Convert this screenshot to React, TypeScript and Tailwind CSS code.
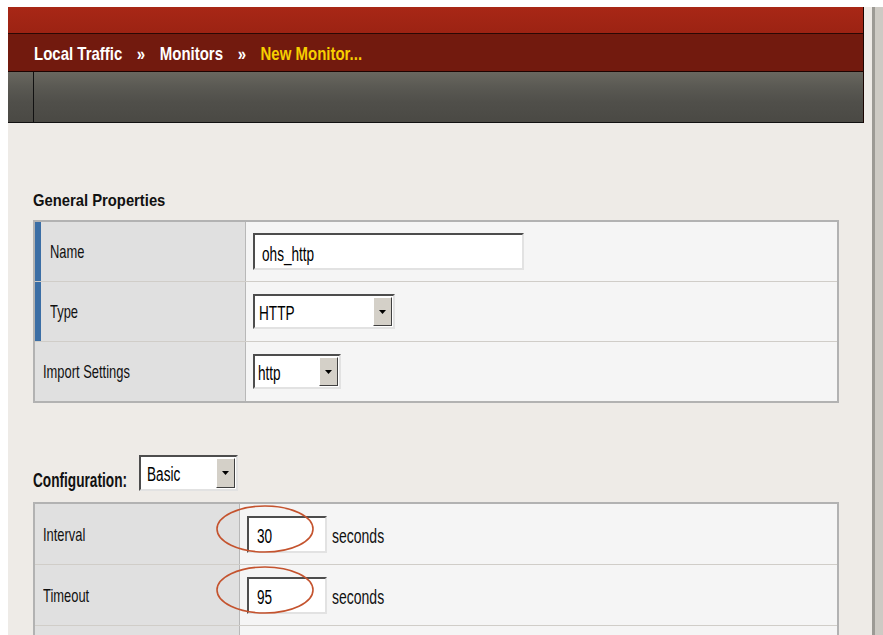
import React from "react";

// the old admin skin uses a tall, narrow face, so text runs get squeezed horizontally
const narrow = "inline-block origin-left scale-x-[0.68] whitespace-nowrap";
const narrowWide = "inline-block origin-left scale-x-[0.7] whitespace-nowrap";

// classic sunken text box
const TextBox = ({ value, width, pad }: { value: string; width: string; pad: string }) => (
	<div className={`${width} ${pad} h-[37px] flex items-center pt-[4px] bg-white border-2 border-t-[#4d4d4d] border-l-[#4d4d4d] border-r-[#e2e2e2] border-b-[#e2e2e2] text-[20px] leading-none text-black`}>
		<span className={narrow}>{value}</span>
	</div>
);

const Select = ({ value, width, height, pad }: { value: string; width: string; height: string; pad: string }) => (
	<div className={`${width} ${height} flex bg-white border-2 border-t-[#4d4d4d] border-l-[#4d4d4d] border-r-[#e2e2e2] border-b-[#e2e2e2]`}>
		<span className={`flex-1 flex items-center ${pad} pt-[2px] text-[20px] leading-none text-black`}>
			<span className={narrow}>{value}</span>
		</span>
		<span className="w-[19px] my-[1px] mr-[1px] flex items-center justify-center bg-[#d4d0c8] border border-t-[#ffffff] border-l-[#ffffff] border-r-[#404040] border-b-[#404040]">
			<svg width="7" height="4" viewBox="0 0 7 4">
				<path d="M0 0h7L3.5 4z" fill="#000" />
			</svg>
		</span>
	</div>
);

// red ring drawn over a field
const Ring = () => (
	<svg className="absolute left-[-31px] top-[-11px] z-10 pointer-events-none" width="100" height="50" viewBox="0 0 100 50">
		<ellipse cx="49" cy="24" rx="48" ry="23" fill="none" stroke="#c4532e" strokeWidth="1.6" />
	</svg>
);

type RowProps = {
	label: string;
	labelW: string;
	marker?: boolean;
	last?: boolean;
	height: string;
	children?: React.ReactNode;
};

const Row = ({ label, labelW, marker, last, height, children }: RowProps) => (
	<div className={`flex ${height} ${last ? "" : "border-b border-[#d0cdc8]"}`}>
		<div className={`${labelW} flex items-stretch bg-[#e0e0e0] border-r border-[#b8b8b8]`}>
			{marker ? <span className="w-[6px] bg-[#3b6ea5]"></span> : null}
			<span className={`flex items-center text-[19px] leading-none text-[#111] ${marker ? "pl-[9px]" : "pl-[8px]"}`}>
				<span className={narrow}>{label}</span>
			</span>
		</div>
		<div className="flex-1 flex items-center pl-[7px] bg-[#f5f5f5]">{children}</div>
	</div>
);

const Seconds = () => (
	<span className="ml-[5px] mt-[4px] text-[20px] leading-none text-[#111]">
		<span className={narrowWide}>seconds</span>
	</span>
);

const Chevrons = () => <span className="text-white">»</span>;

const App = () => {
	return (
		<div className="w-[883px] h-[635px] overflow-hidden bg-white flex flex-col font-['Liberation_Sans',Arial,sans-serif]">
			<div className="h-[7px] shrink-0"></div>
			<div className="flex flex-1 min-h-0">
				<div className="w-[8px] shrink-0"></div>
				<div className="w-[864px] shrink-0 bg-[#eeebe7] flex flex-col">
					{/* header bars */}
					<div className="mr-[8px] border-r border-[#1a0502] flex flex-col">
						<div className="h-[27px] bg-[linear-gradient(#a82716,#9c2313)] border-b border-[#2a0804]"></div>
						<div className="h-[38px] bg-[#721a0e] border-b border-[#1c0402] pl-[26px] pt-[11px]">
							<div className="flex items-start gap-[18px] text-[18.5px] font-bold leading-none origin-left scale-x-[0.81]">
								<span className="text-white">Local Traffic</span>
								<Chevrons />
								<span className="text-white">Monitors</span>
								<Chevrons />
								<span className="text-[#f7cf00]">New Monitor...</span>
							</div>
						</div>
						<div className="h-[51px] bg-[linear-gradient(#69675f,#5a5953_30%,#504f4a_60%,#4a4944)] border-b border-[#111] flex">
							<div className="w-[26px] border-r border-[#111]"></div>
						</div>
					</div>

					{/* page body */}
					<div className="pl-[25px] pr-[33px] flex flex-col">
						<div className="mt-[67px] mb-[8px] text-[17px] font-bold leading-[22px] text-[#111]">
							<span className="inline-block origin-left scale-x-[0.87] whitespace-nowrap">General Properties</span>
						</div>
						<div className="border-2 border-[#b2b2b2] flex flex-col">
							<Row label="Name" labelW="w-[211px]" marker height="h-[60px]">
								<TextBox value="ohs_http" width="w-[271px]" pad="pl-[7px]" />
							</Row>
							<Row label="Type" labelW="w-[211px]" marker height="h-[60px]">
								<Select value="HTTP" width="w-[142px]" height="h-[35px]" pad="pl-[4px]" />
							</Row>
							<Row label="Import Settings" labelW="w-[211px]" last height="h-[59px]">
								<Select value="http" width="w-[88px]" height="h-[35px]" pad="pl-[3px]" />
							</Row>
						</div>

						<div className="mt-[52px] flex items-end">
							<span className="w-[106px] mb-[1px] text-[19.5px] font-bold leading-none text-[#111]">
								<span className={narrowWide}>Configuration:</span>
							</span>
							<Select value="Basic" width="w-[99px]" height="h-[36px]" pad="pl-[6px]" />
						</div>
						<div className="mt-[11px] border-2 border-[#b2b2b2] flex flex-col">
							<Row label="Interval" labelW="w-[205px]" height="h-[61px]">
								<div className="relative">
									<Ring />
									<TextBox value="30" width="w-[80px]" pad="pl-[8px]" />
								</div>
								<Seconds />
							</Row>
							<Row label="Timeout" labelW="w-[205px]" height="h-[61px]">
								<div className="relative">
									<Ring />
									<TextBox value="95" width="w-[80px]" pad="pl-[8px]" />
								</div>
								<Seconds />
							</Row>
							<Row label="" labelW="w-[205px]" last height="h-[61px]" />
						</div>
					</div>
				</div>
				{/* window edge */}
				<div className="w-[3px] shrink-0 bg-[#9c9a95]"></div>
				<div className="flex-1 bg-[#cdcac4]"></div>
			</div>
		</div>
	);
};

export default App;
